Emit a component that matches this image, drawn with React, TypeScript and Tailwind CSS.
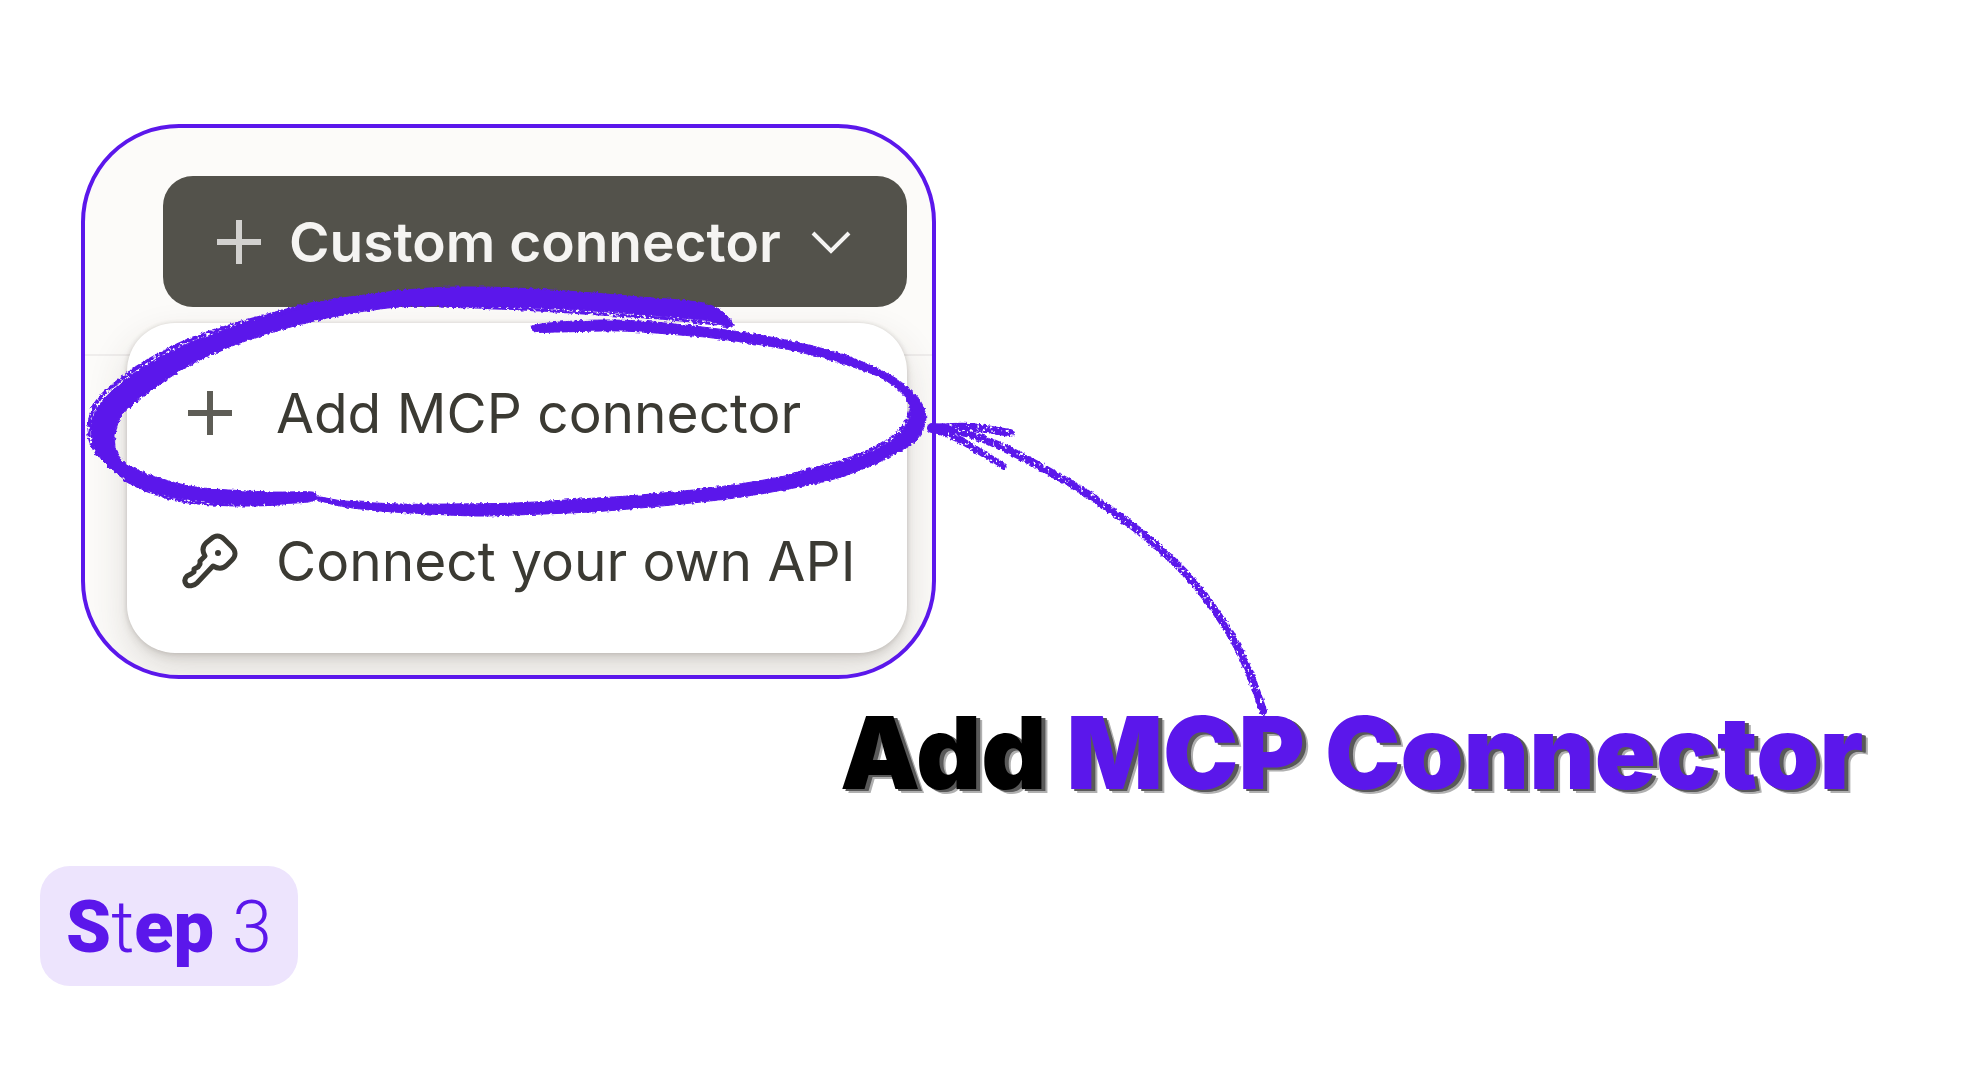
type Point = [number, number]

const BRAND = "#5b17eb"

// smooth curve through the points, open or closed
const smooth = (pts: Point[], closed: boolean) => {
  const n = pts.length
  const at = (i: number) => (closed ? pts[(i + n) % n] : pts[Math.max(0, Math.min(n - 1, i))])
  let d = `M${pts[0][0]} ${pts[0][1]}`
  for (let i = 0; i < (closed ? n : n - 1); i++) {
    const [a, b, c, e] = [at(i - 1), at(i), at(i + 1), at(i + 2)]
    d += `C${b[0] + (c[0] - a[0]) / 6} ${b[1] + (c[1] - a[1]) / 6} ${c[0] - (e[0] - b[0]) / 6} ${c[1] - (e[1] - b[1]) / 6} ${c[0]} ${c[1]}`
  }
  return closed ? d + "Z" : d
}

const wideBrush: Point[] = [
  [733, 325], [724, 313], [710, 305], [690, 301], [640, 297], [580, 292], [515, 288], [470, 287], [430, 288], [380, 293],
  [310, 304], [230, 328], [180, 347], [140, 369], [112, 391], [98, 407], [92, 420], [91, 432], [94, 446], [103, 461],
  [124, 479], [146, 490], [180, 499], [230, 504], [270, 504], [308, 502], [316, 498], [312, 492], [270, 492], [215, 489],
  [185, 485], [150, 475], [130, 466], [121, 459], [115, 447], [116, 430], [122, 415], [136, 402], [152, 390], [190, 365],
  [240, 343], [310, 322], [380, 309], [430, 306], [500, 307], [560, 309], [620, 313], [680, 318], [710, 321], [726, 327],
]

const thinBrush: Point[] = [
  [532, 326], [560, 322], [610, 320], [665, 323], [740, 332], [800, 343], [850, 357], [890, 375], [907, 387], [919, 399],
  [925, 412], [925, 424], [917, 439], [900, 451], [870, 466], [827, 481], [760, 494], [710, 501], [640, 508], [590, 512],
  [515, 515], [475, 516], [430, 514], [380, 511], [340, 506], [316, 499], [320, 497], [345, 501], [400, 504], [450, 504],
  [515, 503], [580, 499], [640, 495], [710, 488], [780, 477], [845, 461], [882, 446], [902, 431], [910, 415], [908, 402],
  [896, 388], [870, 373], [800, 352], [720, 339], [680, 335], [620, 331], [560, 332], [537, 332],
]

const wideFringe: Point[] = [[316, 303], [230, 326], [180, 344], [138, 367], [109, 389], [95, 405], [90, 421], [90, 438], [97, 454]]
const lowerFringe: Point[] = [[125, 480], [148, 491], [182, 501], [235, 505], [285, 504]]
const topFringe: Point[] = [[440, 306], [520, 309], [600, 314], [670, 319], [715, 324]]
const rightFringe: Point[] = [[911, 410], [902, 428], [882, 444], [845, 460], [790, 475]]

const shaft: Point[] = [
  [931, 428], [965, 433], [1000, 446], [1050, 472], [1095, 499], [1150, 540], [1195, 584], [1232, 637], [1251, 677], [1263, 711],
]
const upperBarb: Point[] = [[931, 428], [970, 427], [1010, 433]]
const lowerBarb: Point[] = [[931, 428], [960, 440], [1003, 466]]

function Annotation() {
  return (
    <svg
      className="pointer-events-none absolute left-0 top-0 h-[740px] w-[1300px]"
      viewBox="0 0 1300 740"
      fill="none"
      stroke={BRAND}
      strokeLinecap="round"
      aria-hidden="true"
    >
      <defs>
        <filter id="brush" filterUnits="userSpaceOnUse" x="0" y="0" width="1300" height="740" colorInterpolationFilters="sRGB">
          <feTurbulence type="fractalNoise" baseFrequency="0.3" numOctaves="2" seed="4" result="noise" />
          <feDisplacementMap in="SourceGraphic" in2="noise" scale="4" xChannelSelector="R" yChannelSelector="G" />
        </filter>
        <filter id="chalk" filterUnits="userSpaceOnUse" x="0" y="0" width="1300" height="740" colorInterpolationFilters="sRGB">
          <feTurbulence type="fractalNoise" baseFrequency="0.3" numOctaves="2" seed="9" result="noise" />
          <feColorMatrix in="noise" type="matrix" values="0 0 0 0 0  0 0 0 0 0  0 0 0 0 0  0 0 0 8 -2.2" result="grain" />
          <feDisplacementMap in="SourceGraphic" in2="noise" scale="4" xChannelSelector="R" yChannelSelector="G" result="rough" />
          <feComposite in="rough" in2="grain" operator="in" />
        </filter>
      </defs>
      <g filter="url(#brush)" fill={BRAND} strokeWidth="1">
        <path d={smooth(wideBrush, true)} />
        <path d={smooth(thinBrush, true)} />
      </g>
      <g filter="url(#chalk)">
        <path d={smooth(wideFringe, false)} strokeWidth="4" />
        <path d={smooth(lowerFringe, false)} strokeWidth="3" />
        <path d={smooth(topFringe, false)} strokeWidth="3" />
        <path d={smooth(rightFringe, false)} strokeWidth="3" />
        <path d={smooth(shaft, false)} strokeWidth="8" />
        <path d={smooth(upperBarb, false)} strokeWidth="8" />
        <path d={smooth(lowerBarb, false)} strokeWidth="7" />
      </g>
      <path d="M932 428L945 429" strokeWidth="10" />
    </svg>
  )
}

function PlusIcon({ className }: { className: string }) {
  return (
    <svg className={className} viewBox="0 0 44 44" fill="none" stroke="currentColor" strokeWidth="6" aria-hidden="true">
      <path d="M22 0V44M0 22H44" />
    </svg>
  )
}

function KeyIcon() {
  return (
    <svg
      className="h-14 w-14 shrink-0"
      viewBox="0 0 56 56"
      fill="none"
      stroke="currentColor"
      strokeWidth="5"
      strokeLinecap="round"
      strokeLinejoin="round"
      aria-hidden="true"
    >
      <path d="M29 6C33 2 38 2 42 6L50 14C54 18 54 23 50 27L45 32C41 36 36 36 31 33L15 50C12 53 6 54 4 51C2 48 3 45 5 43L9 41L12 39V36L16 34L18 31V28L23 23C20 18 20 14 24 10Z" />
      <circle cx="36" cy="20" r="3" fill="currentColor" stroke="none" />
    </svg>
  )
}

function ConnectorMenu() {
  return (
    <section className="relative h-[555px] w-[855px] max-w-full overflow-hidden rounded-[98px] border-4 border-[#5b17eb] bg-[#fcfbf9] pl-[42px] pr-[25px] pt-12 font-['Inter','Liberation_Sans',sans-serif]">
      <div className="absolute inset-x-0 top-[226px] h-0.5 bg-[#efedec]" />
      <div className="flex flex-col gap-4">
        <button
          type="button"
          className="ml-9 flex h-[131px] items-center rounded-[30px] bg-[#53524b] pl-[54px] pr-[56px] text-[55px] font-semibold text-[#f5f4f2]"
        >
          <PlusIcon className="h-11 w-11 shrink-0 text-[#d2d1cf]" />
          <span className="ml-7 whitespace-nowrap pt-0.5">Custom connector</span>
          <svg
            className="ml-auto h-6 w-10 shrink-0"
            viewBox="0 0 40 24"
            fill="none"
            stroke="currentColor"
            strokeWidth="4"
            aria-hidden="true"
          >
            <path d="M2 3L20 21L38 3" />
          </svg>
        </button>
        <div className="relative flex h-[330px] flex-col rounded-[48px] bg-white pl-[55px] pt-4 text-[55px] text-[#3b3a33] shadow-[0_0_4px_rgba(60,50,40,0.15),0_4px_8px_rgba(60,50,40,0.12),0_18px_40px_rgba(60,50,40,0.16)]">
          <button type="button" className="flex h-[148px] items-center gap-[38px] whitespace-nowrap text-left">
            <span className="flex w-14 justify-center">
              <PlusIcon className="h-11 w-11 text-[#5e5d56]" />
            </span>
            Add MCP connector
          </button>
          <button type="button" className="flex h-[148px] items-center gap-[38px] whitespace-nowrap text-left">
            <KeyIcon />
            Connect your own API
          </button>
        </div>
      </div>
    </section>
  )
}

export default function App() {
  return (
    <main className="relative min-h-screen bg-white pb-[93px] pt-[124px]">
      <div className="pl-[81px]">
        <ConnectorMenu />
      </div>
      <h1 className="mt-[25px] whitespace-nowrap pl-[840px] font-['Inter','Liberation_Sans',sans-serif] text-[101px] font-black leading-[96px] text-black [text-shadow:3px_2px_0_#595959,4px_2px_0_#595959,6px_4px_0_#b0b0b0]">
        Add <span className="text-[#5b17eb]">MCP Connector</span>
      </h1>
      <div className="ml-10 mt-[66px] flex h-[120px] w-[258px] items-center justify-center rounded-[30px] bg-[#ede4fd]">
        <p className="whitespace-pre pt-1 font-['Roboto','Open_Sans',sans-serif] text-[72px] font-black leading-none text-[#5b17eb]">
          S<span className="font-light">t</span>ep <span className="font-light">3</span>
        </p>
      </div>
      <Annotation />
    </main>
  )
}
